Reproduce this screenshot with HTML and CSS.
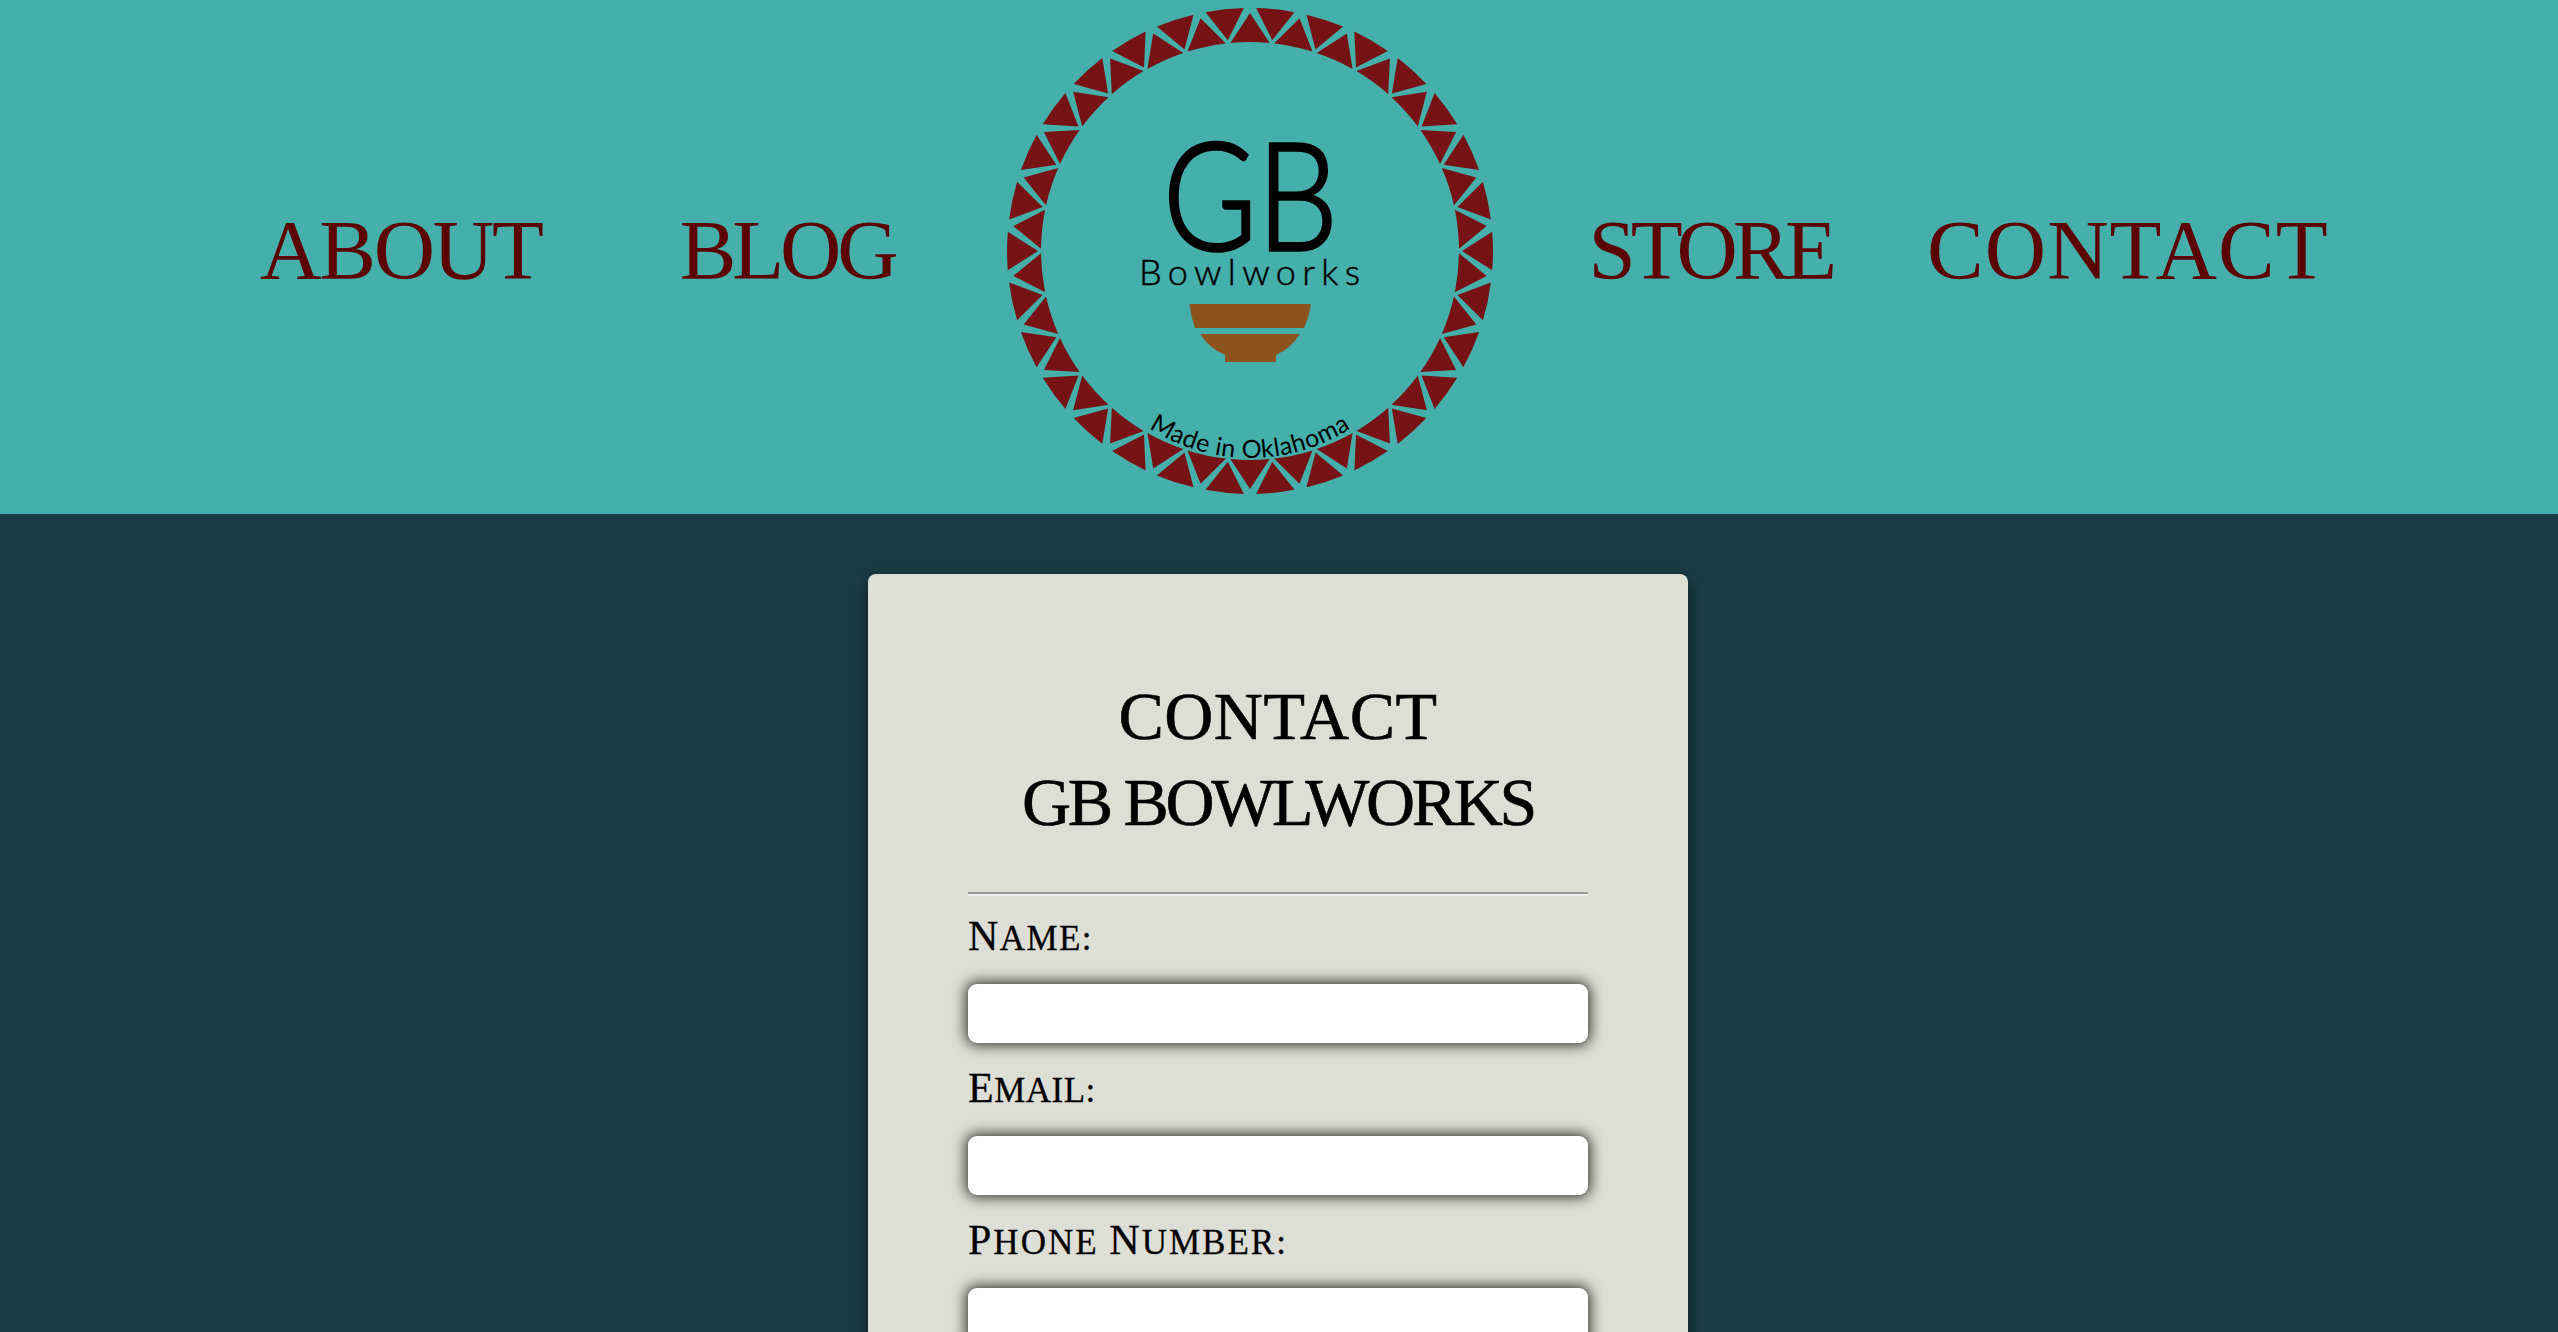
FILE: index.html
```html
<!DOCTYPE html>
<html lang="en">
<head>
<meta charset="utf-8">
<title>Contact GB Bowlworks</title>
<link rel="stylesheet" href="styles.css">
</head>
<body>
<header class="site-header">
  <a class="nav-link nav-about" href="#">ABOUT</a>
  <a class="nav-link nav-blog" href="#">BLOG</a>
  <svg class="logo" viewBox="0 0 500 500" width="500" height="500" role="img" aria-label="GB Bowlworks logo">
    <defs>
      <path id="tri-out" d="M230.33 41.93A209 209 0 0 1 269.67 41.93L250 12Z"/>
      <path id="tri-in" d="M230.7 7.8A243 243 0 0 1 269.3 7.8L250 38Z"/>
      <path id="text-arc" d="M152 429A185.5 185.5 0 0 0 348 429"/>
    </defs>
    <g class="ring">
      <use href="#tri-out" transform="rotate(0 250 250)"/><use href="#tri-in" transform="rotate(6 250 250)"/>
      <use href="#tri-out" transform="rotate(12 250 250)"/><use href="#tri-in" transform="rotate(18 250 250)"/>
      <use href="#tri-out" transform="rotate(24 250 250)"/><use href="#tri-in" transform="rotate(30 250 250)"/>
      <use href="#tri-out" transform="rotate(36 250 250)"/><use href="#tri-in" transform="rotate(42 250 250)"/>
      <use href="#tri-out" transform="rotate(48 250 250)"/><use href="#tri-in" transform="rotate(54 250 250)"/>
      <use href="#tri-out" transform="rotate(60 250 250)"/><use href="#tri-in" transform="rotate(66 250 250)"/>
      <use href="#tri-out" transform="rotate(72 250 250)"/><use href="#tri-in" transform="rotate(78 250 250)"/>
      <use href="#tri-out" transform="rotate(84 250 250)"/><use href="#tri-in" transform="rotate(90 250 250)"/>
      <use href="#tri-out" transform="rotate(96 250 250)"/><use href="#tri-in" transform="rotate(102 250 250)"/>
      <use href="#tri-out" transform="rotate(108 250 250)"/><use href="#tri-in" transform="rotate(114 250 250)"/>
      <use href="#tri-out" transform="rotate(120 250 250)"/><use href="#tri-in" transform="rotate(126 250 250)"/>
      <use href="#tri-out" transform="rotate(132 250 250)"/><use href="#tri-in" transform="rotate(138 250 250)"/>
      <use href="#tri-out" transform="rotate(144 250 250)"/><use href="#tri-in" transform="rotate(150 250 250)"/>
      <use href="#tri-out" transform="rotate(156 250 250)"/><use href="#tri-in" transform="rotate(162 250 250)"/>
      <use href="#tri-out" transform="rotate(168 250 250)"/><use href="#tri-in" transform="rotate(174 250 250)"/>
      <use href="#tri-out" transform="rotate(180 250 250)"/><use href="#tri-in" transform="rotate(186 250 250)"/>
      <use href="#tri-out" transform="rotate(192 250 250)"/><use href="#tri-in" transform="rotate(198 250 250)"/>
      <use href="#tri-out" transform="rotate(204 250 250)"/><use href="#tri-in" transform="rotate(210 250 250)"/>
      <use href="#tri-out" transform="rotate(216 250 250)"/><use href="#tri-in" transform="rotate(222 250 250)"/>
      <use href="#tri-out" transform="rotate(228 250 250)"/><use href="#tri-in" transform="rotate(234 250 250)"/>
      <use href="#tri-out" transform="rotate(240 250 250)"/><use href="#tri-in" transform="rotate(246 250 250)"/>
      <use href="#tri-out" transform="rotate(252 250 250)"/><use href="#tri-in" transform="rotate(258 250 250)"/>
      <use href="#tri-out" transform="rotate(264 250 250)"/><use href="#tri-in" transform="rotate(270 250 250)"/>
      <use href="#tri-out" transform="rotate(276 250 250)"/><use href="#tri-in" transform="rotate(282 250 250)"/>
      <use href="#tri-out" transform="rotate(288 250 250)"/><use href="#tri-in" transform="rotate(294 250 250)"/>
      <use href="#tri-out" transform="rotate(300 250 250)"/><use href="#tri-in" transform="rotate(306 250 250)"/>
      <use href="#tri-out" transform="rotate(312 250 250)"/><use href="#tri-in" transform="rotate(318 250 250)"/>
      <use href="#tri-out" transform="rotate(324 250 250)"/><use href="#tri-in" transform="rotate(330 250 250)"/>
      <use href="#tri-out" transform="rotate(336 250 250)"/><use href="#tri-in" transform="rotate(342 250 250)"/>
      <use href="#tri-out" transform="rotate(348 250 250)"/><use href="#tri-in" transform="rotate(354 250 250)"/>
    </g>
    <text class="logo-gb" x="163" y="249" textLength="175" lengthAdjust="spacingAndGlyphs">GB</text>
    <text class="logo-name" x="139" y="284" textLength="221" lengthAdjust="spacing">Bowlworks</text>
    <g class="bowl">
      <path d="M189.5 303L311 303Q309 316 304 327L195 327Q191 316 189.5 303Z"/>
      <path d="M200 333L300 333Q290 348 276 354L276 361L225 361L225 354Q210 348 200 333Z"/>
    </g>
    <text class="logo-made"><textPath href="#text-arc" startOffset="50%">Made in Oklahoma</textPath></text>
  </svg>
  <a class="nav-link nav-store" href="#">STORE</a>
  <a class="nav-link nav-contact" href="#">CONTACT</a>
</header>
<main class="page">
  <form class="card">
    <h1 class="card-title"><span class="title-top">CONTACT</span><span class="title-bottom">GB BOWLWORKS</span></h1>
    <hr class="rule">
    <label class="field-label" for="name">N<span class="small-cap">ame:</span></label>
    <input class="field-input" id="name" type="text">
    <label class="field-label label-email" for="email">E<span class="small-cap">mail:</span></label>
    <input class="field-input" id="email" type="email">
    <label class="field-label label-phone" for="phone">P<span class="small-cap">hone </span>N<span class="small-cap">umber:</span></label>
    <input class="field-input" id="phone" type="tel">
  </form>
</main>
</body>
</html>
```
FILE: styles.css
```css
* { box-sizing: border-box; }

html, body {
  margin: 0;
  height: 1332px;
  overflow: hidden;
}

body {
  background: #1a3c45;
  font-family: "Liberation Serif", "Times New Roman", serif;
  color: #000;
}

.site-header {
  display: flex;
  align-items: flex-start;
  height: 514px;
  padding: 1px 0 0 260px;
  background: #45afab;
}

.nav-link {
  margin-top: 200px;
  font-size: 85px;
  line-height: 98px;
  color: #5c0404;
  text-decoration: none;
  white-space: nowrap;
}

.nav-about { letter-spacing: -2.2px; }
.nav-blog { margin-left: 138px; letter-spacing: -4.2px; }
.logo { flex: none; display: block; margin-left: 106px; }
.nav-store { margin-left: 88px; letter-spacing: -4.8px; }
.nav-contact { margin-left: 95px; letter-spacing: 1px; }

.ring use { fill: #771314; }
.bowl path { fill: #8c531d; }

.logo-gb {
  font-family: Lato, "Noto Sans", sans-serif;
  font-weight: 300;
  font-size: 150px;
  fill: #000;
  stroke: #000;
  stroke-width: 3.5px;
}

.logo-name {
  font-family: Lato, "Noto Sans", sans-serif;
  font-weight: 300;
  font-size: 36px;
  fill: #000;
  stroke: #000;
  stroke-width: 0.5px;
}

.logo-made {
  font-family: Lato, "Noto Sans", sans-serif;
  font-weight: 400;
  font-size: 25px;
  letter-spacing: 0.4px;
  text-anchor: middle;
  fill: #000;
}

.page {
  display: flex;
  justify-content: center;
  padding: 60px 2px 60px 0;
}

.card {
  display: flex;
  flex-direction: column;
  width: 820px;
  padding: 99px 100px 80px;
  background: #ddded5;
  border-radius: 8px;
  box-shadow: 0 6px 16px rgba(0, 0, 0, 0.55);
}

.card-title {
  display: flex;
  flex-direction: column;
  margin: 0;
  font-size: 68px;
  font-weight: 400;
  line-height: 86px;
  text-align: center;
  -webkit-text-stroke: 0.6px #000;
}

.title-top { letter-spacing: 0.5px; }
.title-bottom { letter-spacing: -3.35px; }

.rule {
  width: 100%;
  height: 4px;
  margin: 47px 0 15px;
  border: 0;
  border-top: 2px solid #999;
  border-bottom: 2px solid #eeeeea;
}

.field-label {
  font-size: 42px;
  line-height: 50px;
  letter-spacing: 1.4px;
  -webkit-text-stroke: 0.3px #000;
}

.label-email { letter-spacing: 0.5px; }
.label-phone { letter-spacing: 2px; }

.small-cap {
  font-size: 35px;
  line-height: 1;
  text-transform: uppercase;
}

.field-input {
  width: 100%;
  height: 59px;
  margin: 23px 0 20px;
  border: 0;
  border-radius: 9px;
  background: #fff;
  box-shadow: 0 0 14px 2px rgba(0, 0, 0, 0.8);
}
```
